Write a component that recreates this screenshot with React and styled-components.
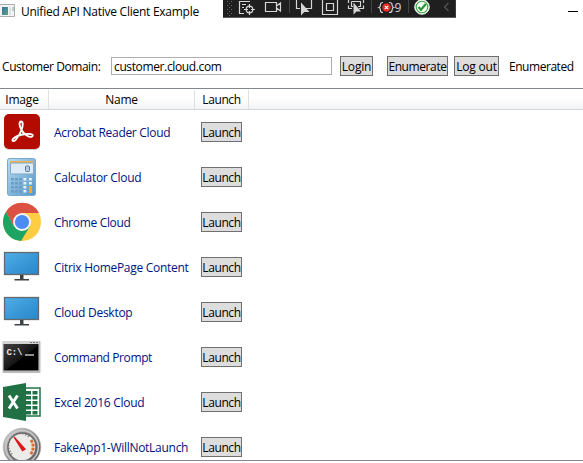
import React from "react";
import styled, { createGlobalStyle } from "styled-components";

const Global = createGlobalStyle`
  * { box-sizing: border-box; }
  body { margin: 0; background: #fff; overflow: hidden; }
`;

const Window = styled.main`
  display: flex;
  flex-direction: column;
  width: 583px;
  height: 463px;
  background: #fff;
  color: #000;
  font: 12px/16px "Open Sans", "Noto Sans", sans-serif;
  overflow: hidden;
`;

const Label = styled.span`
  white-space: nowrap;
  letter-spacing: ${(p) => p.$track || 0}px;
`;

const TitleBar = styled.header`
  display: flex;
  align-items: flex-start;
  height: 56px;
  flex: none;
`;
const WindowIcon = styled.svg`
  width: 16px;
  height: 14px;
  margin: 4px 5px 0 0;
  flex: none;
`;
const Title = styled(Label)`
  width: 202px;
  margin-top: 4px;
`;
const DebugBar = styled.div`
  display: flex;
  width: 233px;
  height: 18px;
  background: #1f1f20;
  border-bottom: 1px solid #5a5a5c;
  border-right: 1px solid #3c3c3e;
`;
const Minimize = styled.i`
  width: 10px;
  height: 1px;
  background: #000;
  margin: 11px 5px 0 auto;
`;

const Form = styled.section`
  display: flex;
  align-items: center;
  height: 20px;
  padding-left: 2px;
  flex: none;
`;
const FieldLabel = styled(Label)`
  width: 109px;
  padding-top: 1px;
`;
const Field = styled.div`
  display: flex;
  align-items: center;
  width: 221px;
  height: 18px;
  margin-right: 8px;
  padding: 1px 0 0 2px;
  border: 1px solid #abadb3;
`;
const Button = styled.button`
  display: flex;
  align-items: center;
  justify-content: center;
  flex: none;
  width: ${(p) => p.$w}px;
  height: 20px;
  margin: 0 ${(p) => p.$gap || 0}px 0 0;
  padding: 1px 0 0;
  border: 1px solid #707070;
  background: #ddd;
  color: #000;
  font: inherit;
`;
const Status = styled(Label)`
  padding-top: 1px;
`;

const Table = styled.section`
  display: flex;
  flex-direction: column;
  height: 373px;
  margin-top: 12px;
  border-top: 1px solid #828790;
  border-bottom: 1px solid #828790;
  overflow: hidden;
`;
const HeaderRow = styled.div`
  display: flex;
  flex: none;
  height: 21px;
  padding-top: 1px;
  border-bottom: 1px solid #d5d5d5;
  background: linear-gradient(#fff 0, #fff 45%, #f2f3f5 100%);
`;
const HeaderCell = styled.div`
  display: flex;
  align-items: center;
  justify-content: center;
  width: ${(p) => p.$w}px;
  padding: 1px ${(p) => p.$inset || 0}px 0 0;
  border-right: 1px solid #dfe0e2;
`;
const Row = styled.div`
  display: flex;
  align-items: flex-start;
  flex: none;
  height: 45px;
`;
const IconCell = styled.div`
  width: 54px;
  height: 45px;
  padding: 2px 0 0 2px;
`;
const AppIcon = styled.svg`
  display: block;
  width: 40px;
  height: 40px;
`;
const NameCell = styled(Label)`
  width: 147px;
  padding-top: 15px;
  color: #00137f;
`;
const LaunchCell = styled.div`
  padding-top: 12px;
`;

function DebugIcons() {
  return (
    <svg width="232" height="17" viewBox="223 0 232 17" fill="none" stroke="#d6d6d6" strokeWidth="1.2">
      <g fill="#66666a" stroke="none">
        {[1, 5, 9, 13].map((y) => (
          <g key={y}>
            <rect x="227" y={y} width="1" height="1" />
            <rect x="231" y={y} width="1" height="1" />
            <rect x="229" y={y + 2} width="1" height="1" />
          </g>
        ))}
      </g>
      <path d="M239 1.5H250M242 4.5H246M242 7.500H244M239.500 1V13.500H244" />
      <circle cx="249.500" cy="9.500" r="3.300" />
      <path d="M249.500 4V8M249.500 11V15M244 9.500H248M251 9.500H255" />
      <path d="M265.500 2.500H276.500V11.500H265.500ZM276.500 6L280.500 3V11L276.500 8" />
      <path d="M289.500 0V13M371.500 0V13M408.500 0V13" stroke="#444448" strokeWidth="1" />
      <path d="M296.500 0V8.500H300M306 8.500H311.500V0" />
      <path d="M301 2.500V15.500L304.300 12H309.500Z" fill="#d6d6d6" stroke="none" />
      <path d="M322.500 -1V14.500H337.500V-1M326.500 3.500H333.500V10.500H326.500Z" />
      <path d="M348.500 0V3M348.500 5.500V8.500H352M359 8.500H363.500V5.500M363.500 3V0M351.500 1.500V6.500H353M358 6.500H360.500V1.500H351.500" />
      <path d="M353.500 2.500V14.500L356.500 11.500H361Z" fill="#d6d6d6" stroke="none" />
      <path d="M383 2.500Q380.500 2.500 380.500 4.500Q380.500 7 379 7.500Q380.500 8 380.500 10.500Q380.500 12.500 383 12.500M389 2.500Q392 2.500 392 4.500Q392 7 393.500 7.500Q392 8 392 10.500Q392 12.500 389 12.500" />
      <circle cx="386.500" cy="7.500" r="4.200" fill="#e52b20" stroke="none" />
      <path d="M384.800 5.800L388.200 9.200M388.200 5.800L384.800 9.200" stroke="#fff" />
      <text x="394.500" y="12" fill="#d6d6d6" stroke="none" fontFamily="Open Sans" fontSize="12">9</text>
      <circle cx="422" cy="7" r="7.300" fill="#f4faf4" stroke="#e8eee8" strokeWidth="1" />
      <circle cx="422" cy="7" r="5.800" stroke="#43a34a" strokeWidth="1.100" />
      <path d="M418.500 7L421 9.800L425.800 4" stroke="#269a32" strokeWidth="2.200" />
      <path d="M448.500 3L444.500 7L448.500 11" stroke="#55555a" />
    </svg>
  );
}

function Acrobat() {
  return (
    <>
      <rect x="2" y="3" width="36" height="35" rx="5" fill="#999" opacity=".5" />
      <rect x="2" y="2" width="36" height="35" rx="5" fill="#b30b00" />
      <path d="M19.500 18C17 14 17 9.500 19 9.500C21.500 9.500 21 14 19.500 18C18 22 16 25 14 27.500C11.500 30.500 9 28.500 11.500 26.500C13.500 24.500 19 22.500 25 22C30 21.500 32 23 30 24.500C27.500 26 22 22.500 19.500 18Z" fill="none" stroke="#fff" strokeWidth="1.900" strokeLinejoin="round" />
    </>
  );
}
function Calculator() {
  return (
    <>
      <defs><linearGradient id="calc" x2="1" y2="1"><stop stopColor="#b9dcf1" /><stop offset="1" stopColor="#5596c7" /></linearGradient></defs>
      <rect x="5.500" y="1.500" width="28" height="37" rx="2" fill="url(#calc)" stroke="#79a9cc" />
      <rect x="8" y="4" width="23" height="3" fill="#f2b24c" />
      <rect x="8.500" y="6" width="23" height="11" rx="1" fill="#dcebf6" stroke="#7fa9c8" />
      <rect x="23.500" y="9" width="4" height="5.500" rx="1" fill="#b5cbe2" stroke="#5a7ba4" />
      {[21, 25, 29, 33].map((y) => [9, 13, 17, 21.500, 27].map((x) => (
        <rect key={`${x}-${y}`} x={x} y={y} width="2.800" height="2.500" fill={x < 20 ? "#6b9cc2" : "#e3f1fb"} />
      )))}
      <rect x="27" y="29" width="3" height="7" fill="#f5a623" />
    </>
  );
}
function Chrome() {
  return (
    <>
      <circle cx="20" cy="20" r="19" fill="#ffcd42" />
      <path d="M20 11H37A19 19 0 0 0 4 9.800L12.200 24.500Z" fill="#dd5144" />
      <path d="M4 9.800A19 19 0 0 0 19 39L27.800 24.500L12.200 24.500Z" fill="#1da362" />
      <circle cx="20" cy="20" r="9" fill="#f4f6fb" />
      <circle cx="20" cy="20" r="7.100" fill="#4c8bf5" />
    </>
  );
}
function Monitor() {
  return (
    <>
      <defs><linearGradient id="screen" x2="1" y2="1"><stop stopColor="#52aee6" /><stop offset=".5" stopColor="#3a99d8" /><stop offset="1" stopColor="#2c86c8" /></linearGradient></defs>
      <rect x="2.500" y="5.500" width="34" height="22" fill="url(#screen)" stroke="#66696c" strokeWidth="1.300" />
      <path d="M18 28H21.500V32H27V33.500H12.500V32H18Z" fill="#3d4246" />
    </>
  );
}
function Prompt() {
  return (
    <>
      <defs><linearGradient id="prompt" x2="1" y2="1"><stop stopColor="#424242" /><stop offset=".52" stopColor="#151515" /><stop offset=".53" stopColor="#000" /></linearGradient></defs>
      <rect x=".5" y="4" width="38" height="32" rx="1" fill="#bbb" />
      <rect x="1" y="4" width="36" height="30" fill="#d3d3d3" />
      <rect x="1.500" y="7" width="35" height="26.500" fill="url(#prompt)" />
      <path d="M28 5.500H30M31 5.500H33M34 5.500H36" stroke="#777" />
      <text x="4.500" y="18" fill="#e8e8e8" fontFamily="Liberation Mono" fontSize="9" fontWeight="700" textLength="16">C:\</text>
      <path d="M23 18H32" stroke="#ddd" strokeWidth="1.300" />
    </>
  );
}
function Excel() {
  return (
    <>
      <rect x="20" y="6" width="18" height="28" fill="#fff" stroke="#207245" strokeWidth="1.500" />
      {[9, 14, 19, 24, 29].map((y) => (
        <g key={y} fill="#207245"><rect x="24" y={y} width="5" height="3.500" /><rect x="30.500" y={y} width="5" height="3.500" /></g>
      ))}
      <path d="M1 5L24 1V39L1 35Z" fill="#207245" />
      <path d="M7 13.500L15.500 26.500M15.500 13.500L7 26.500" stroke="#fff" strokeWidth="2.900" />
    </>
  );
}
function Gauge() {
  return (
    <>
      <defs><linearGradient id="rim" x2="1" y2="1"><stop stopColor="#d8d8d8" /><stop offset=".5" stopColor="#8b8b8b" /><stop offset="1" stopColor="#4d4d4d" /></linearGradient></defs>
      <circle cx="20" cy="20" r="18.800" fill="url(#rim)" stroke="#aaa" strokeWidth=".6" />
      <circle cx="20" cy="20" r="16.400" fill="none" stroke="#c9c9c9" strokeWidth="1.500" />
      <circle cx="20" cy="20" r="14" fill="#ebebe8" stroke="#666" strokeWidth="1.300" />
      <path d="M10 27A12 12 0 0 1 27 10" fill="none" stroke="#777" strokeWidth="2" strokeDasharray="1 2" />
      <path d="M29 13A12 12 0 0 1 28 28" fill="none" stroke="#df6b32" strokeWidth="3" strokeDasharray="3 1" />
      <path d="M12 10L23 22L20.500 23.500Z" fill="#dc1818" stroke="#dc1818" strokeWidth="1.300" />
    </>
  );
}

const apps = [
  ["Acrobat Reader Cloud", Acrobat, -0.3],
  ["Calculator Cloud", Calculator, -0.3],
  ["Chrome Cloud", Chrome, -0.33],
  ["Citrix HomePage Content", Monitor, -0.29],
  ["Cloud Desktop", Monitor, -0.27],
  ["Command Prompt", Prompt, -0.4],
  ["Excel 2016 Cloud", Excel, -0.27],
  ["FakeApp1-WillNotLaunch", Gauge, -0.28],
];

export default function App() {
  return (
    <>
      <Global />
      <Window>
        <TitleBar>
          <WindowIcon viewBox="0 0 16 14">
            <defs><linearGradient id="window" x2="1" y2="1"><stop stopColor="#3b6fa5" /><stop offset="1" stopColor="#55a878" /></linearGradient></defs>
            <path d="M-1 .5H14.500V12.500H-1Z" fill="#f4f4f4" stroke="#a9adb2" />
            <rect x="2" y="3" width="6" height="8" fill="url(#window)" />
            <path d="M9 3H11V11H9Z" fill="#dce3e7" /><path d="M12 3H14V7H12Z" fill="#b3d1c5" />
          </WindowIcon>
          <Title $track={-0.26}>Unified API Native Client Example</Title>
          <DebugBar><DebugIcons /></DebugBar>
          <Minimize />
        </TitleBar>
        <Form>
          <FieldLabel $track={-0.43}>Customer Domain:</FieldLabel>
          <Field><Label $track={-0.37}>customer.cloud.com</Label></Field>
          <Button $w={33} $gap={14}><Label $track={-0.2}>Login</Label></Button>
          <Button $w={61} $gap={6}><Label $track={-0.4}>Enumerate</Label></Button>
          <Button $w={45} $gap={10}><Label $track={-0.2}>Log out</Label></Button>
          <Status $track={-0.46}>Enumerated</Status>
        </Form>
        <Table>
          <HeaderRow>
            <HeaderCell $w={49} $inset={4}><Label $track={-0.2}>Image</Label></HeaderCell>
            <HeaderCell $w={146}><Label $track={-0.3}>Name</Label></HeaderCell>
            <HeaderCell $w={54}><Label $track={-0.4}>Launch</Label></HeaderCell>
          </HeaderRow>
          {apps.map(([name, Icon, track]) => (
            <Row key={name}>
              <IconCell><AppIcon viewBox="0 0 40 40"><Icon /></AppIcon></IconCell>
              <NameCell $track={track}>{name}</NameCell>
              <LaunchCell><Button $w={41}><Label $track={-0.4}>Launch</Label></Button></LaunchCell>
            </Row>
          ))}
        </Table>
      </Window>
    </>
  );
}
